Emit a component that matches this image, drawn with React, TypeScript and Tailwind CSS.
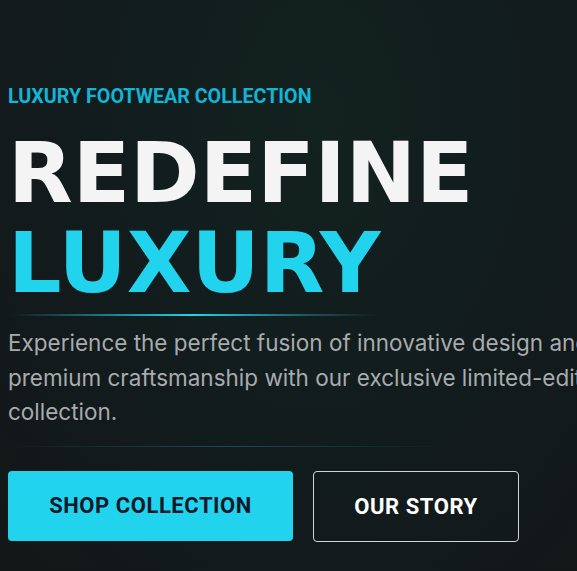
export default function App() {
  return (
    <div className="relative h-[571px] w-[577px] overflow-hidden bg-[#121a1b] bg-[radial-gradient(ellipse_at_55%_20%,#12221f_0%,#121b1c_55%,#131718_100%)]">
      <div className="flex w-[700px] flex-col pl-2 pt-[83px]">
        <div className="text-[19.7px] font-bold leading-[28px] text-[#12b5d6]" style={{ fontFamily: "Roboto, sans-serif" }}>
          LUXURY FOOTWEAR COLLECTION
        </div>
        <h1 className="mt-[17px] text-[84px] font-bold leading-[90px]" style={{ fontFamily: "'DejaVu Sans', sans-serif" }}>
          <span className="block text-[#f4f4f4]">REDEFINE</span>
          <span className="block text-[#22d3ee]">LUXURY</span>
        </h1>
        <div className="ml-[2px] mt-[6px] h-[2px] w-[366px] bg-[linear-gradient(90deg,transparent,#22d3ee_50%,#1e5a63_80%,transparent)]" />
        <p className="mt-[10px] w-[660px] text-[22.5px] leading-[34.5px] text-[#a7abae]" style={{ fontFamily: "Inter, sans-serif" }}>
          Experience the perfect fusion of innovative design and premium craftsmanship with our exclusive limited-edition collection.
        </p>
        <div className="mt-[16px] h-px w-[440px] bg-[linear-gradient(90deg,transparent,#1c4c52_50%,transparent)]" />
        <div className="mt-[24px] flex gap-[20px]" style={{ fontFamily: "Roboto, sans-serif" }}>
          <button className="h-[70px] w-[285px] rounded-[4px] bg-[#22d3ee] text-[22px] font-bold tracking-wide text-[#111827]">
            SHOP COLLECTION
          </button>
          <button className="h-[71px] w-[206px] rounded-[4px] border border-[#d1d5db] text-[22px] font-bold tracking-wide text-white">
            OUR STORY
          </button>
        </div>
      </div>
    </div>
  );
}
